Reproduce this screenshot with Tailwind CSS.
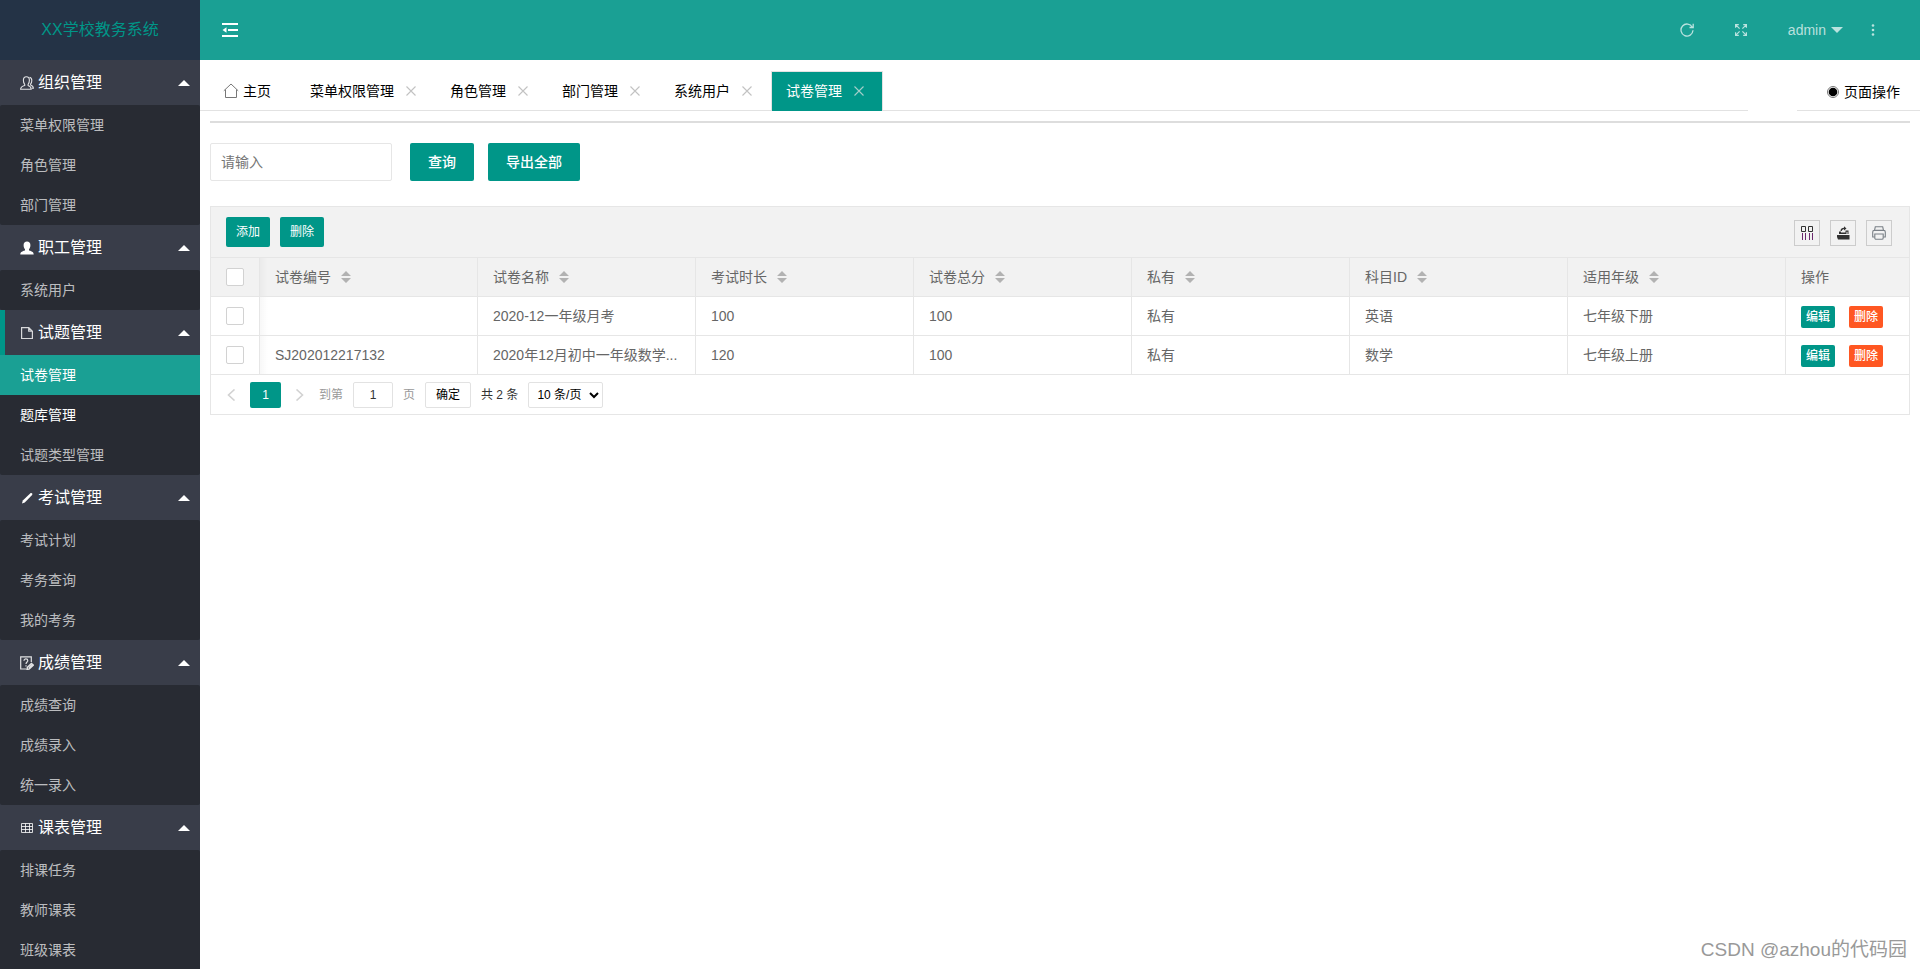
<!DOCTYPE html>
<html lang="zh-CN">
<head>
<meta charset="utf-8">
<meta name="viewport" content="width=device-width, initial-scale=1">
<title>XX学校教务系统</title>
<script src="https://cdn.jsdelivr.net/npm/@tailwindcss/browser@4"></script>
</head>
<body class="relative flex h-screen overflow-hidden bg-white font-['Liberation_Sans','Noto_Sans_CJK_SC',sans-serif] text-sm text-black">

<svg class="hidden" aria-hidden="true">
  <symbol id="sort" viewBox="0 0 10 12"><path d="M5 0l5 5H0zM5 12L0 7h10z" fill="#b2b2b2"/></symbol>
  <symbol id="close" viewBox="0 0 10 10"><path d="M.5.5l9 9M9.5.5l-9 9" fill="none" stroke="currentColor" stroke-width="1.1"/></symbol>
  <symbol id="up" viewBox="0 0 12 6"><path d="M6 0l6 6H0z" fill="currentColor"/></symbol>
</svg>

<aside class="flex h-screen w-[200px] shrink-0 flex-col overflow-hidden bg-[#393d49]">
  <h1 class="flex h-[60px] shrink-0 items-center justify-center bg-[#243346] text-base text-[#009688]">XX学校教务系统</h1>
  <nav class="flex min-h-0 flex-1 flex-col overflow-hidden text-white/70">
    <button type="button" class="flex h-[45px] shrink-0 items-center gap-1 px-[10px] pl-[20px] text-base text-white">
      <svg class="size-[14px]" viewBox="0 0 14 14" fill="none" stroke="currentColor" stroke-width="1.1" stroke-opacity=".85"><path d="M.6 13.2h10.6c0-2-.9-2.800-3.100-3.700V8.400C9 7.500 9.400 6.400 9.400 4.300 9.400 2 8.200.7 6.400.7S3.400 2 3.400 4.300c0 2.100.4 3.200 1.300 4.100v1.100C1.700 10.400.6 11.200.6 13.200zM9.600 1.200c1.400.3 2.200 1.400 2.200 3.300 0 1.800-.3 2.700-1.200 3.500v.9c1.900.7 2.800 1.600 2.800 3.400h-1.500"/></svg>
      <span>组织管理</span><svg class="ml-auto h-[6px] w-[12px]"><use href="#up"/></svg>
    </button>
    <div class="flex shrink-0 flex-col rounded-xs bg-[#282b33]">
      <a href="#" class="flex h-10 items-center px-5 pb-px">菜单权限管理</a>
      <a href="#" class="flex h-10 items-center px-5 pb-px">角色管理</a>
      <a href="#" class="flex h-10 items-center px-5 pb-px">部门管理</a>
    </div>
    <button type="button" class="flex h-[45px] shrink-0 items-center gap-1 px-[10px] pl-[20px] text-base text-white">
      <svg class="size-[14px]" viewBox="0 0 14 14" fill="currentColor"><path d="M.3 13.500c0-2.300 1.200-3.100 4.700-4.100V8.300C4.200 7.500 3.600 6 3.600 4 3.600 1.700 4.900.5 7 .5s3.400 1.200 3.400 3.500c0 2-.6 3.500-1.400 4.300v1.100c3.500 1 4.700 1.800 4.700 4.100z"/></svg>
      <span>职工管理</span><svg class="ml-auto h-[6px] w-[12px]"><use href="#up"/></svg>
    </button>
    <div class="flex shrink-0 flex-col rounded-xs bg-[#282b33]">
      <a href="#" class="flex h-10 items-center px-5 pb-px">系统用户</a>
    </div>
    <button type="button" class="flex h-[45px] shrink-0 items-center gap-1 border-l-5 border-[#009688] px-[10px] pl-[15px] text-base text-white">
      <svg class="size-[14px]" viewBox="0 0 14 14" fill="none" stroke="currentColor" stroke-width="1.200" stroke-opacity=".8"><path d="M1.600 1.700h7.200l3.600 3.500v7.300H1.600zM8.700 1.700v3.500h3.700"/></svg>
      <span>试题管理</span><svg class="ml-auto h-[6px] w-[12px]"><use href="#up"/></svg>
    </button>
    <div class="flex shrink-0 flex-col rounded-xs bg-[#282b33]">
      <a href="#" aria-current="page" class="flex h-10 items-center bg-[#1aa094] px-5 pb-px text-white">试卷管理</a>
      <a href="#" class="flex h-10 items-center px-5 pb-px text-white">题库管理</a>
      <a href="#" class="flex h-10 items-center px-5 pb-px">试题类型管理</a>
    </div>
    <button type="button" class="flex h-[45px] shrink-0 items-center gap-1 px-[10px] pl-[20px] text-base text-white">
      <svg class="size-[14px]" viewBox="0 0 14 14" fill="currentColor"><path d="M2 12.500l.8-2.900 7.600-7.300c1.100-.9 2.600.4 1.700 1.600L4.800 11.500z"/></svg>
      <span>考试管理</span><svg class="ml-auto h-[6px] w-[12px]"><use href="#up"/></svg>
    </button>
    <div class="flex shrink-0 flex-col rounded-xs bg-[#282b33]">
      <a href="#" class="flex h-10 items-center px-5 pb-px">考试计划</a>
      <a href="#" class="flex h-10 items-center px-5 pb-px">考务查询</a>
      <a href="#" class="flex h-10 items-center px-5 pb-px">我的考务</a>
    </div>
    <button type="button" class="flex h-[45px] shrink-0 items-center gap-1 px-[10px] pl-[20px] text-base text-white">
      <svg class="size-[14px]" viewBox="0 0 14 14" fill="none" stroke="currentColor" stroke-width="1.200" stroke-opacity=".85"><path d="M6 13H.7V.8h10.600V6M4 4.800C4 2.300 7.800 2.400 7.800 4.700 7.800 6 6 6.200 6 8M6 9.200v1.200"/><path d="M7 13.300l.4-2 4-3.800 1.900 1.700-4.200 3.800zM9 12l3-3" stroke-width="1.500"/></svg>
      <span>成绩管理</span><svg class="ml-auto h-[6px] w-[12px]"><use href="#up"/></svg>
    </button>
    <div class="flex shrink-0 flex-col rounded-xs bg-[#282b33]">
      <a href="#" class="flex h-10 items-center px-5 pb-px">成绩查询</a>
      <a href="#" class="flex h-10 items-center px-5 pb-px">成绩录入</a>
      <a href="#" class="flex h-10 items-center px-5 pb-px">统一录入</a>
    </div>
    <button type="button" class="flex h-[45px] shrink-0 items-center gap-1 px-[10px] pl-[20px] text-base text-white">
      <svg class="size-[14px]" viewBox="0 0 14 14" fill="none" stroke="currentColor" stroke-opacity=".8"><path d="M1.500 2.500h11v9h-11zM1.500 5.500h11M1.500 8.500h11M5.500 2.500v9M9.500 2.500v9"/></svg>
      <span>课表管理</span><svg class="ml-auto h-[6px] w-[12px]"><use href="#up"/></svg>
    </button>
    <div class="flex shrink-0 flex-col rounded-xs bg-[#282b33]">
      <a href="#" class="flex h-10 items-center px-5 pb-px">排课任务</a>
      <a href="#" class="flex h-10 items-center px-5 pb-px">教师课表</a>
      <a href="#" class="flex h-10 items-center px-5 pb-px">班级课表</a>
    </div>
  </nav>
</aside>

<div class="flex min-w-0 flex-1 flex-col">
  <header class="flex h-[60px] shrink-0 items-center justify-between bg-[#1aa094] pr-[45px] pl-[22px] text-white/70">
    <button type="button" aria-label="收起菜单" class="text-white">
      <svg class="h-[14px] w-[16px]" viewBox="0 0 16 14" fill="currentColor"><path d="M0 0h16v2H0zM6 6h10v2H6zM0 12h16v2H0zM.5 7l4-2.800v5.600z"/></svg>
    </button>
    <div class="flex items-center">
      <button type="button" aria-label="刷新" class="mr-10">
        <svg class="size-[14px]" viewBox="0 0 14 14" fill="none" stroke="currentColor" stroke-width="1.300"><path d="M12.300 4.200A6 6 0 1 0 13 7.300M13.200.8v3.700H9.500"/></svg>
      </button>
      <button type="button" aria-label="全屏" class="mr-10">
        <svg class="size-[14px]" viewBox="0 0 14 14" fill="none" stroke="currentColor" stroke-width="1.200"><path d="M1.600 4.800V1.600h3.200M1.600 1.600l4 4M9.200 1.600h3.200v3.200M12.400 1.600l-4 4M1.600 9.200v3.200h3.200M1.600 12.400l4-4M12.400 9.200v3.200H9.200M12.400 12.400l-4-4"/></svg>
      </button>
      <button type="button" class="flex items-center gap-[5px]">admin<svg class="h-[6px] w-[12px] rotate-180"><use href="#up"/></svg></button>
      <button type="button" aria-label="更多" class="ml-[28px]">
        <svg class="h-[14px] w-[4px]" viewBox="0 0 4 14" fill="currentColor"><circle cx="2" cy="2.500" r="1.300"/><circle cx="2" cy="7" r="1.300"/><circle cx="2" cy="11.500" r="1.300"/></svg>
      </button>
    </div>
  </header>

  <div class="flex h-[51px] shrink-0 items-end">
    <div role="tablist" class="flex h-10 min-w-0 flex-1 border-b border-[#e2e2e2] pl-2">
      <button type="button" role="tab" class="mr-[9px] flex items-center gap-1 px-[15px]">
        <svg class="size-4" viewBox="0 0 16 16" fill="none" stroke="#777"><path d="M.8 7.800L8 1l7.200 6.800M2.500 6.500v8h11v-8"/></svg>主页
      </button>
      <button type="button" role="tab" class="flex items-center gap-3 pr-[19px] pl-[15px]">菜单权限管理<svg class="size-[10px] text-[#c2c2c2]"><use href="#close"/></svg></button>
      <button type="button" role="tab" class="flex items-center gap-3 pr-[19px] pl-[15px]">角色管理<svg class="size-[10px] text-[#c2c2c2]"><use href="#close"/></svg></button>
      <button type="button" role="tab" class="flex items-center gap-3 pr-[19px] pl-[15px]">部门管理<svg class="size-[10px] text-[#c2c2c2]"><use href="#close"/></svg></button>
      <button type="button" role="tab" class="flex items-center gap-3 pr-[19px] pl-[15px]">系统用户<svg class="size-[10px] text-[#c2c2c2]"><use href="#close"/></svg></button>
      <button type="button" role="tab" aria-selected="true" class="-mb-px flex items-center gap-3 border border-b-0 border-[#e2e2e2] bg-[#009688] pr-[18px] pb-[2px] pl-[14px] text-white">试卷管理<svg class="size-[10px] text-[#a5cfca]"><use href="#close"/></svg></button>
    </div>
    <button type="button" class="ml-[49px] flex h-10 items-center gap-[5px] border-b border-[#e2e2e2] pt-[3px] pr-5 pl-[30px]">
      <svg class="size-[12px]" viewBox="0 0 12 12"><circle cx="6" cy="6" r="5.500" fill="none" stroke="#777"/><circle cx="6" cy="6" r="4.300"/></svg>页面操作
    </button>
  </div>

  <main class="flex flex-1 flex-col px-[10px] pt-[10px]">
    <hr class="border-t-2 border-[#ddd]">
    <form class="mt-5 flex items-center">
      <input type="text" aria-label="关键字" placeholder="请输入" class="h-[38px] w-[182px] rounded-xs border border-[#e6e6e6] px-[10px] outline-none placeholder:text-[#757575]">
      <button type="button" class="ml-[18px] h-[38px] rounded-xs bg-[#009688] px-[18px] font-medium text-white">查询</button>
      <button type="button" class="ml-[14px] h-[38px] rounded-xs bg-[#009688] px-[18px] font-medium text-white">导出全部</button>
    </form>

    <section class="mt-[25px] border border-[#e6e6e6] text-[#666]">
      <div class="flex h-[51px] items-center gap-[10px] border-b border-[#e6e6e6] bg-[#f2f2f2] px-[15px]">
        <button type="button" class="h-[30px] rounded-xs bg-[#009688] px-[10px] text-xs text-white">添加</button>
        <button type="button" class="h-[30px] rounded-xs bg-[#009688] px-[10px] text-xs text-white">删除</button>
        <div class="mr-[2px] ml-auto flex gap-[10px] pt-[2px]">
          <button type="button" aria-label="筛选列" class="flex size-[26px] items-center justify-center border border-[#ccc]">
            <svg class="size-[14px]" viewBox="0 0 14 14" fill="none" stroke="#333"><path d="M1.500.5h4v5h-4zM8.500.5h4v5h-4z"/><path d="M2.500 7v7M5.500 7v7M9.500 7v7M12.500 7v7" stroke="#6b2a6e"/></svg>
          </button>
          <button type="button" aria-label="导出" class="flex size-[26px] items-center justify-center border border-[#ccc]">
            <svg class="size-[14px]" viewBox="0 0 14 14" fill="#333"><path d="M1 9h12.500v4.500H2L1 11zM3 8V5.500h2v1h4.500V4.500h3V8h-1V5.800h-1V8zM4.500 5C4.500 2.800 6 1.800 8 1.800V.3L10.500 2.500 8 4.600V3.200C6.700 3.200 6 3.700 5.800 5z"/></svg>
          </button>
          <button type="button" aria-label="打印" class="flex size-[26px] items-center justify-center border border-[#ccc]">
            <svg class="size-[14px]" viewBox="0 0 14 14" fill="none" stroke="#7a8087" stroke-width="1.100"><path d="M2.500 4.300L3.300.8h7.400l.8 3.500M2.600 11H.7V6c0-1 .6-1.600 1.600-1.600h9.400c1 0 1.600.6 1.600 1.600v5h-1.900"/><path d="M2.800 8h8.400v4c0 .8-.5 1.300-1.300 1.300H4.100c-.8 0-1.300-.5-1.300-1.300z"/></svg>
          </button>
        </div>
      </div>

      <table class="w-full table-fixed border-separate border-spacing-0 text-left">
        <colgroup><col class="w-[49px]"><col><col><col><col><col><col><col><col class="w-[123px]"></colgroup>
        <thead>
          <tr class="h-[39px] bg-[#f2f2f2]">
            <th class="border-r border-b border-[#e6e6e6] pl-[15px]"><input type="checkbox" aria-label="全选" class="block size-[18px] appearance-none rounded-xs border border-[#d2d2d2] bg-white"></th>
            <th class="border-r border-b border-[#e6e6e6] bg-[linear-gradient(to_right,rgba(0,0,0,0.03),transparent_8px)] px-[15px] font-normal"><button type="button" class="flex items-center gap-[10px]">试卷编号<svg class="h-[12px] w-[10px]"><use href="#sort"/></svg></button></th>
            <th class="border-r border-b border-[#e6e6e6] px-[15px] font-normal"><button type="button" class="flex items-center gap-[10px]">试卷名称<svg class="h-[12px] w-[10px]"><use href="#sort"/></svg></button></th>
            <th class="border-r border-b border-[#e6e6e6] px-[15px] font-normal"><button type="button" class="flex items-center gap-[10px]">考试时长<svg class="h-[12px] w-[10px]"><use href="#sort"/></svg></button></th>
            <th class="border-r border-b border-[#e6e6e6] px-[15px] font-normal"><button type="button" class="flex items-center gap-[10px]">试卷总分<svg class="h-[12px] w-[10px]"><use href="#sort"/></svg></button></th>
            <th class="border-r border-b border-[#e6e6e6] px-[15px] font-normal"><button type="button" class="flex items-center gap-[10px]">私有<svg class="h-[12px] w-[10px]"><use href="#sort"/></svg></button></th>
            <th class="border-r border-b border-[#e6e6e6] px-[15px] font-normal"><button type="button" class="flex items-center gap-[10px]">科目ID<svg class="h-[12px] w-[10px]"><use href="#sort"/></svg></button></th>
            <th class="border-r border-b border-[#e6e6e6] px-[15px] font-normal"><button type="button" class="flex items-center gap-[10px]">适用年级<svg class="h-[12px] w-[10px]"><use href="#sort"/></svg></button></th>
            <th class="border-b border-[#e6e6e6] px-[15px] font-normal">操作</th>
          </tr>
        </thead>
        <tbody>
          <tr class="h-[39px]">
            <td class="border-r border-b border-[#e6e6e6] pl-[15px]"><input type="checkbox" aria-label="选择第1行" class="block size-[18px] appearance-none rounded-xs border border-[#d2d2d2] bg-white"></td>
            <td class="border-r border-b border-[#e6e6e6] bg-[linear-gradient(to_right,rgba(0,0,0,0.03),transparent_8px)] px-[15px]"></td>
            <td class="border-r border-b border-[#e6e6e6] px-[15px] whitespace-nowrap">2020-12一年级月考</td>
            <td class="border-r border-b border-[#e6e6e6] px-[15px]">100</td>
            <td class="border-r border-b border-[#e6e6e6] px-[15px]">100</td>
            <td class="border-r border-b border-[#e6e6e6] px-[15px]">私有</td>
            <td class="border-r border-b border-[#e6e6e6] px-[15px]">英语</td>
            <td class="border-r border-b border-[#e6e6e6] px-[15px]">七年级下册</td>
            <td class="border-b border-[#e6e6e6] pl-[15px]"><div class="flex gap-[14px] pt-px text-xs font-medium text-white"><button type="button" class="h-[22px] rounded-xs bg-[#009688] px-[5px]">编辑</button><button type="button" class="h-[22px] rounded-xs bg-[#ff5722] px-[5px]">删除</button></div></td>
          </tr>
          <tr class="h-[39px]">
            <td class="border-r border-b border-[#e6e6e6] pl-[15px]"><input type="checkbox" aria-label="选择第2行" class="block size-[18px] appearance-none rounded-xs border border-[#d2d2d2] bg-white"></td>
            <td class="border-r border-b border-[#e6e6e6] bg-[linear-gradient(to_right,rgba(0,0,0,0.03),transparent_8px)] px-[15px]">SJ202012217132</td>
            <td class="border-r border-b border-[#e6e6e6] px-[15px] whitespace-nowrap">2020年12月初中一年级数学...</td>
            <td class="border-r border-b border-[#e6e6e6] px-[15px]">120</td>
            <td class="border-r border-b border-[#e6e6e6] px-[15px]">100</td>
            <td class="border-r border-b border-[#e6e6e6] px-[15px]">私有</td>
            <td class="border-r border-b border-[#e6e6e6] px-[15px]">数学</td>
            <td class="border-r border-b border-[#e6e6e6] px-[15px]">七年级上册</td>
            <td class="border-b border-[#e6e6e6] pl-[15px]"><div class="flex gap-[14px] pt-px text-xs font-medium text-white"><button type="button" class="h-[22px] rounded-xs bg-[#009688] px-[5px]">编辑</button><button type="button" class="h-[22px] rounded-xs bg-[#ff5722] px-[5px]">删除</button></div></td>
          </tr>
        </tbody>
      </table>

      <div class="flex h-[39px] items-center gap-[10px] pl-[15px] text-xs text-[#333]">
        <button type="button" aria-label="上一页" class="mr-[4px]"><svg class="h-[12px] w-[10px]" viewBox="0 0 10 12" fill="none" stroke="#d2d2d2" stroke-width="1.600"><path d="M8.500.5L2.500 6l6 5.500"/></svg></button>
        <button type="button" aria-current="page" class="h-[26px] w-[31px] rounded-xs bg-[#009688] text-white">1</button>
        <button type="button" aria-label="下一页" class="ml-[4px]"><svg class="h-[12px] w-[10px]" viewBox="0 0 10 12" fill="none" stroke="#d2d2d2" stroke-width="1.600"><path d="M1.500.5l6 5.500-6 5.500"/></svg></button>
        <label for="page" class="ml-[4px] text-[#999]">到第</label>
        <input id="page" type="text" value="1" class="h-[26px] w-10 rounded-xs border border-[#e2e2e2] text-center outline-none">
        <span class="text-[#999]">页</span>
        <button type="button" class="h-[26px] w-[46px] rounded-xs border border-[#e2e2e2] text-black">确定</button>
        <span>共 2 条</span>
        <select aria-label="每页条数" class="h-[26px] w-[75px] rounded-xs border border-[#e2e2e2] bg-white pl-1 text-black"><option>10 条/页</option></select>
      </div>
    </section>
  </main>
</div>

<p class="absolute right-[13px] bottom-[6px] text-[19px] text-[#999]">CSDN @azhou的代码园</p>
</body>
</html>
